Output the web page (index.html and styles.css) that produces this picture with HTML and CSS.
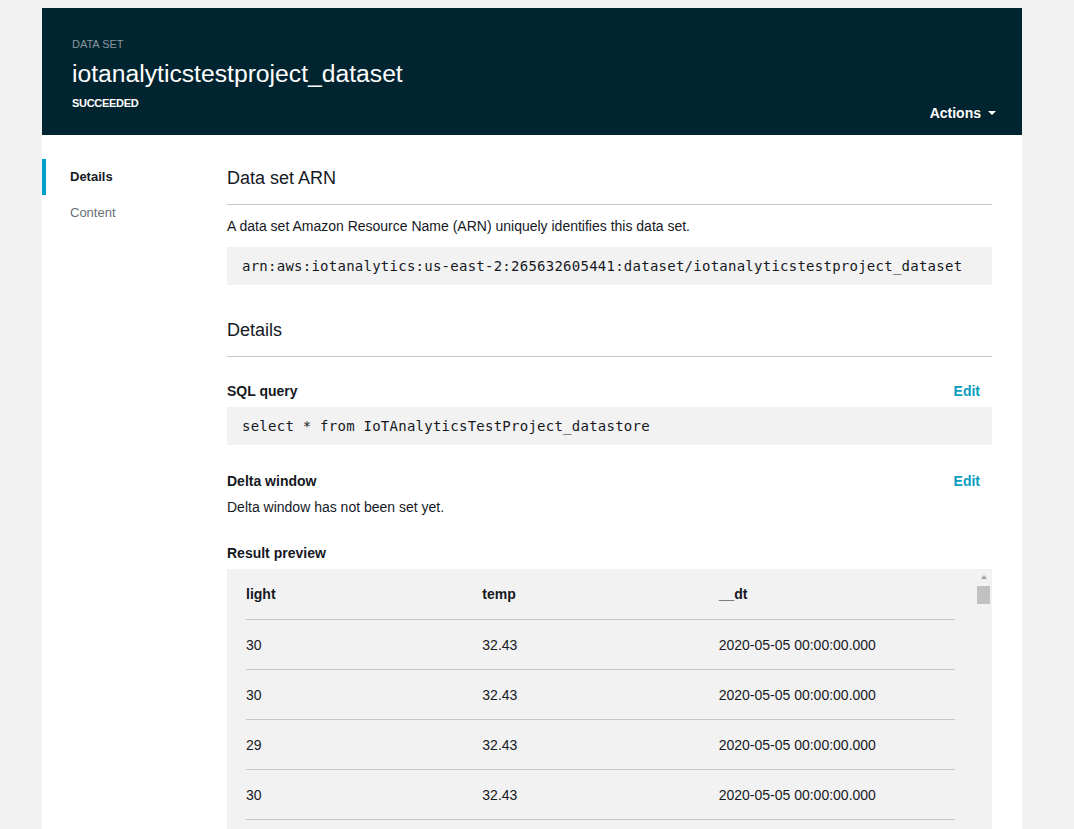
FILE: index.html
```html
<!DOCTYPE html>
<html>
<head>
<meta charset="utf-8">
<link rel="stylesheet" href="styles.css">
</head>
<body>
<div class="card">
  <header class="hero">
    <div class="hero-left">
      <div class="eyebrow">DATA SET</div>
      <h1 class="title">iotanalyticstestproject_dataset</h1>
      <div class="status">SUCCEEDED</div>
    </div>
    <button class="actions">Actions <span class="caret"></span></button>
  </header>
  <div class="body">
    <nav class="side">
      <a class="side-item active">Details</a>
      <a class="side-item">Content</a>
    </nav>
    <main class="main">
      <section class="section">
        <h2 class="sec-title">Data set ARN</h2>
        <p class="desc">A data set Amazon Resource Name (ARN) uniquely identifies this data set.</p>
        <div class="code">arn:aws:iotanalytics:us-east-2:265632605441:dataset/iotanalyticstestproject_dataset</div>
      </section>
      <section class="section">
        <h2 class="sec-title">Details</h2>
        <div class="field">
          <div class="field-head"><span class="label">SQL query</span><a class="edit">Edit</a></div>
          <div class="code">select * from IoTAnalyticsTestProject_datastore</div>
        </div>
        <div class="field field-delta">
          <div class="field-head"><span class="label">Delta window</span><a class="edit">Edit</a></div>
          <p class="plain">Delta window has not been set yet.</p>
        </div>
        <div class="field">
          <div class="field-head"><span class="label">Result preview</span></div>
          <div class="preview">
            <table class="grid">
              <thead>
                <tr><th>light</th><th>temp</th><th>__dt</th></tr>
              </thead>
              <tbody>
                <tr><td>30</td><td>32.43</td><td>2020-05-05 00:00:00.000</td></tr>
                <tr><td>30</td><td>32.43</td><td>2020-05-05 00:00:00.000</td></tr>
                <tr><td>29</td><td>32.43</td><td>2020-05-05 00:00:00.000</td></tr>
                <tr><td>30</td><td>32.43</td><td>2020-05-05 00:00:00.000</td></tr>
              </tbody>
            </table>
            <div class="vscroll">
              <span class="arrow-up"></span>
              <span class="thumb"></span>
            </div>
          </div>
        </div>
      </section>
    </main>
  </div>
</div>
</body>
</html>
```

FILE: styles.css
```css
html, body {
  margin: 0;
  padding: 0;
  background: #f2f2f2;
  height: 100%;
  overflow: hidden;
}
body {
  font-family: "Liberation Sans", Arial, sans-serif;
  color: #16191f;
  padding-top: 8px;
  padding-left: 42px;
}
.card {
  width: 980px;
  background: #fff;
  min-height: 900px;
}
.hero {
  background: #012530;
  height: 127px;
  box-sizing: border-box;
  padding: 30px 26px 14px 30px;
  display: flex;
  justify-content: space-between;
  align-items: flex-end;
}
.hero-left {
  align-self: flex-start;
}
.eyebrow {
  font-size: 11px;
  color: #8a969c;
  line-height: 12px;
}
.title {
  margin: 10px 0 0;
  font-size: 24.7px;
  font-weight: normal;
  color: #fff;
  line-height: 28px;
  letter-spacing: 0;
}
.status {
  margin-top: 9px;
  font-size: 11px;
  font-weight: bold;
  color: #fff;
  line-height: 12px;
  letter-spacing: -0.3px;
}
.actions {
  background: none;
  border: 0;
  padding: 0;
  color: #fff;
  font-family: inherit;
  font-size: 14px;
  font-weight: bold;
  display: flex;
  align-items: center;
  gap: 7px;
}
.caret {
  width: 0;
  height: 0;
  border-left: 4px solid transparent;
  border-right: 4px solid transparent;
  border-top: 4px solid #fff;
}
.body {
  display: flex;
  padding-top: 28px;
}
.side {
  flex: 0 0 185px;
  display: flex;
  flex-direction: column;
  margin-top: -4px;
}
.side-item {
  font-size: 13px;
  color: #687078;
  padding: 6px 0 6px 24px;
  line-height: 24px;
  border-left: 4px solid transparent;
}
.side-item.active {
  color: #16191f;
  font-weight: bold;
  border-left-color: #00a1c9;
}
.main {
  width: 765px;
}
.section {
  margin-bottom: 30px;
}
.sec-title {
  margin: 0;
  font-size: 18px;
  font-weight: normal;
  line-height: 30px;
  padding-bottom: 11px;
  border-bottom: 1px solid #c6c6c6;
  color: #16191f;
}
.desc {
  margin: 13px 0 0;
  font-size: 14px;
  line-height: 17px;
}
.code {
  margin-top: 12px;
  background: #f2f2f2;
  height: 38px;
  line-height: 38px;
  padding: 0 15px;
  font-family: "DejaVu Sans Mono", "Liberation Mono", monospace;
  font-size: 14px;
  letter-spacing: 0.25px;
  color: #16191f;
  white-space: nowrap;
}
.field {
  margin-top: 24px;
}
.field-delta {
  margin-top: 26px;
}
.field .code {
  margin-top: 6px;
}
.field-head {
  display: flex;
  justify-content: space-between;
  align-items: center;
  height: 20px;
}
.label {
  font-size: 14px;
  font-weight: bold;
}
.edit {
  font-size: 14px;
  font-weight: bold;
  color: #0a9cbf;
  margin-right: 12px;
}
.plain {
  margin: 8px 0 0;
  font-size: 14px;
  line-height: 17px;
  padding-bottom: 3px;
}
.preview {
  margin-top: 6px;
  background: #f2f2f2;
  display: flex;
  padding: 0 0 0 19px;
  height: 300px;
}
.grid {
  border-collapse: collapse;
  width: 709px;
  font-size: 14px;
  align-self: flex-start;
}
.grid th {
  text-align: left;
  font-weight: bold;
  height: 50px;
  padding: 0;
  width: 236px;
  border-bottom: 1px solid #c8c8c8;
}
.grid td {
  height: 49px;
  padding: 0;
  border-bottom: 1px solid #c8c8c8;
}
.vscroll {
  margin-left: 21px;
  width: 15px;
  display: flex;
  flex-direction: column;
  align-items: center;
  padding-top: 6px;
}
.arrow-up {
  width: 0;
  height: 0;
  border-left: 3px solid transparent;
  border-right: 3px solid transparent;
  border-bottom: 4px solid #a3a3a3;
}
.thumb {
  margin-top: 7px;
  width: 13px;
  height: 18px;
  background: #c1c1c1;
}
```
